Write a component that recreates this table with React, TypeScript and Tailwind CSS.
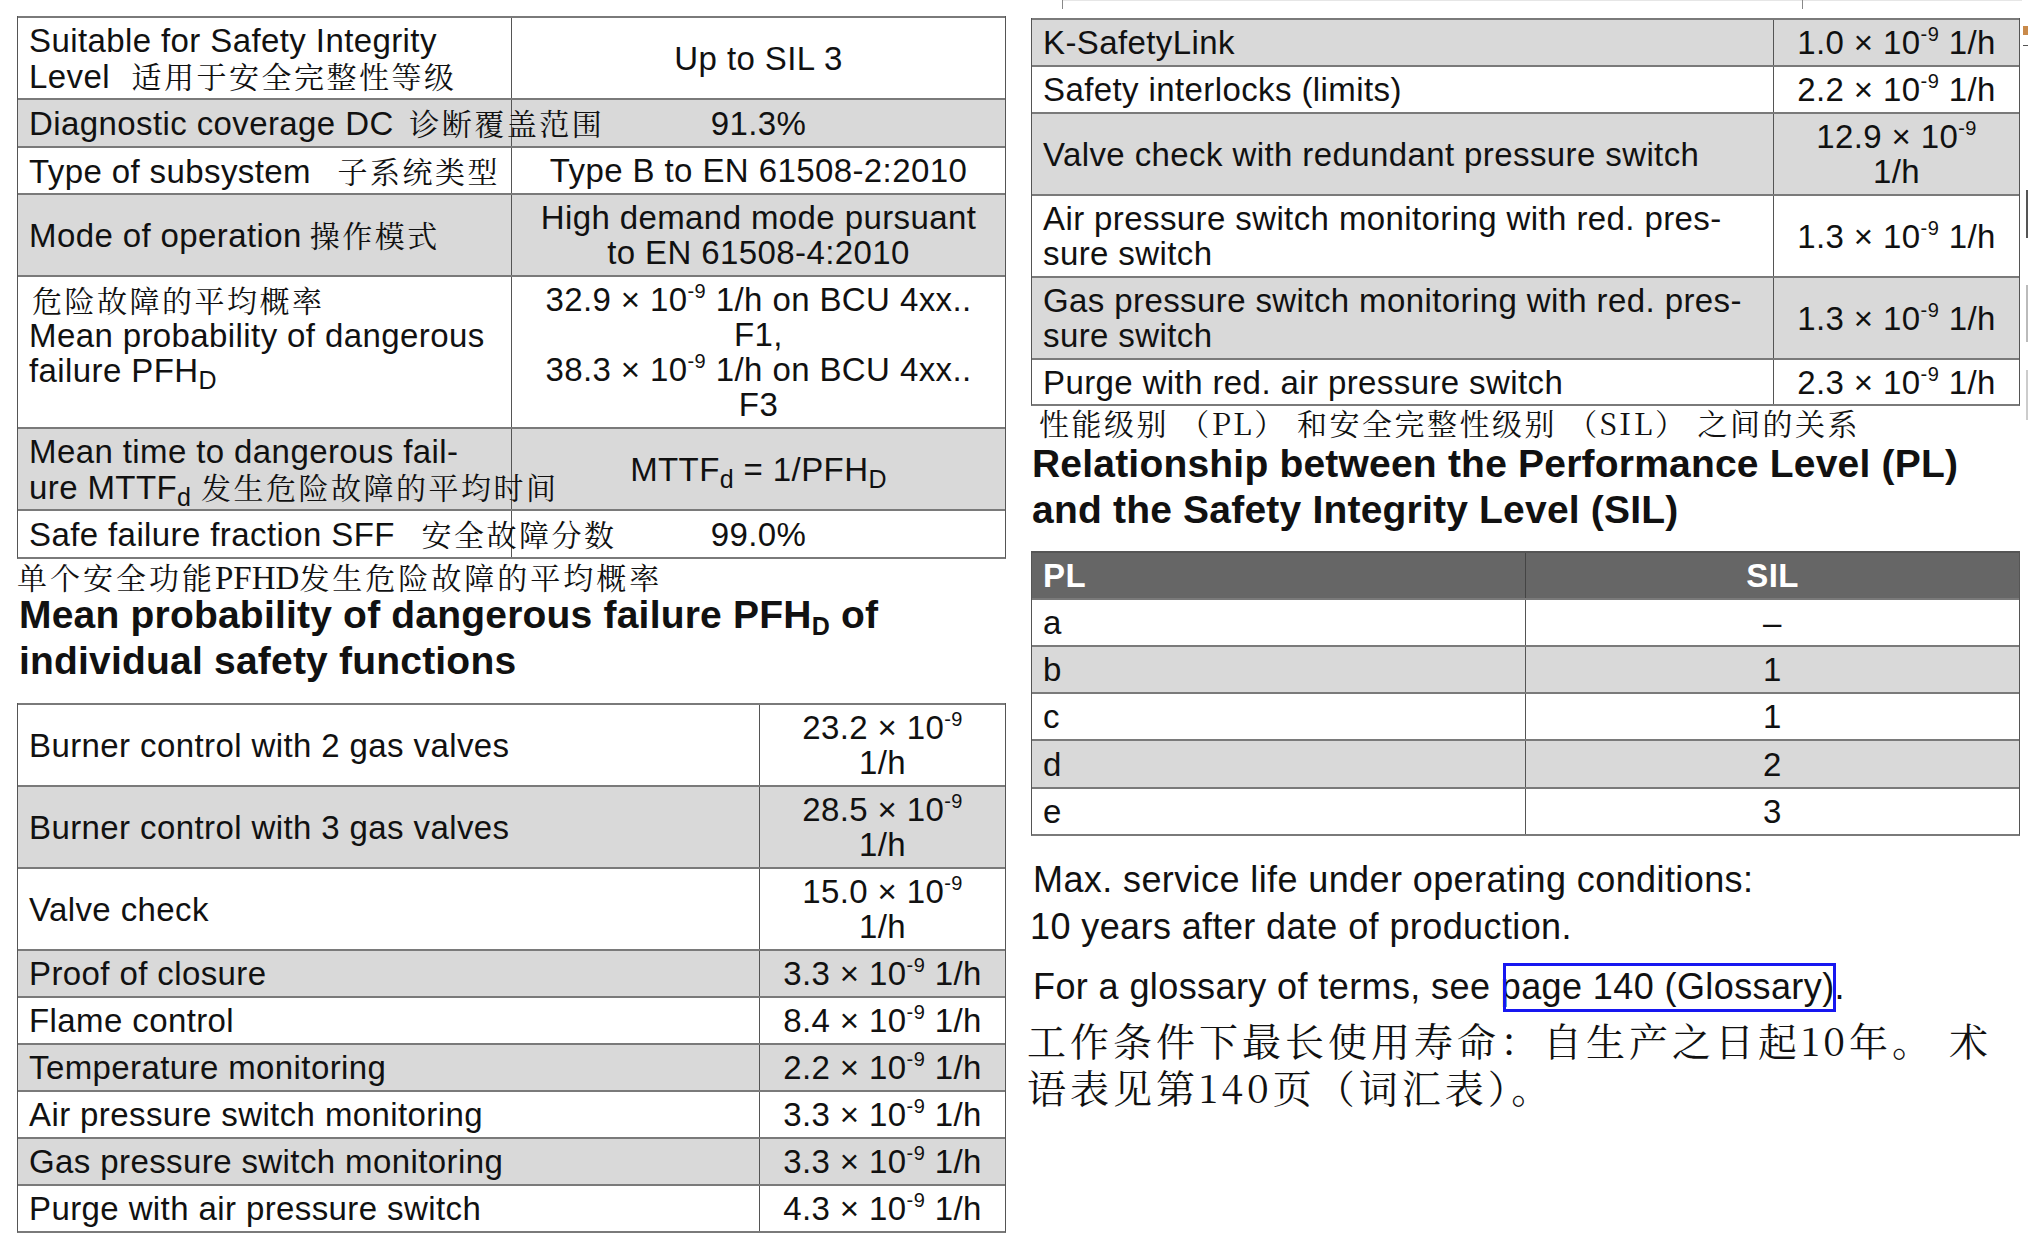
import type { ReactNode } from 'react'

const zhFont = "font-['Noto_Serif_CJK_SC','Noto_Sans_CJK_SC',serif]"

// Chinese overlay text (translation layer on top of the PDF page)
function Zh({ children, cls = 'text-[30px] tracking-[2.5px]', className = '' }: { children: ReactNode; cls?: string; className?: string }) {
  return <span className={`${zhFont} ${cls} ${className}`}>{children}</span>
}

function Exp() {
  return <sup className="text-[20px] -top-[13px]">-9</sup>
}

function Sub({ children }: { children: ReactNode }) {
  return <sub className="text-[25px] -bottom-[7px]">{children}</sub>
}

function Rate({ v }: { v: string }) {
  return (
    <>
      {v} × 10<Exp /> 1/h
    </>
  )
}

interface RowProps {
  h: string
  cols: string
  grey?: boolean
  top?: boolean
  left: ReactNode[]
  right: ReactNode[]
}

function Row({ h, cols, grey, top, left, right }: RowProps) {
  return (
    <div className={`grid ${cols} ${h} border-t-2 border-[#7a7a7a] ${grey ? 'bg-[#d9d9d9]' : 'bg-white'}`}>
      <div className={`flex flex-col border-r border-[#555] pl-[11px] ${top ? 'justify-start pt-[5px]' : 'justify-center'}`}>
        {left.map((l, i) => (
          <div key={i} className="whitespace-nowrap">
            {l}
          </div>
        ))}
      </div>
      <div className={`flex flex-col items-center text-center ${top ? 'justify-start pt-[5px]' : 'justify-center'}`}>
        {right.map((r, i) => (
          <div key={i} className="whitespace-nowrap">
            {r}
          </div>
        ))}
      </div>
    </div>
  )
}

const half = 'grid-cols-[494px_1fr]'
const wide = 'grid-cols-[742px_1fr]'
const tableCls = 'border-x border-[#555] border-b-2 border-b-[#7a7a7a] text-[33px] leading-[35px] tracking-[0.4px]'

export default function App() {
  return (
    <div className="relative w-[2028px] h-[1252px] overflow-hidden bg-white text-[#111] font-['Liberation_Sans',Arial,sans-serif]">
      {/* remnants of the previous table, cut off at the top */}
      <div className="absolute left-[1062px] top-0 w-[960px] h-px bg-[#e6e6e6]" />
      <div className="absolute left-[1062px] top-0 w-px h-[9px] bg-[#888]" />
      <div className="absolute left-[1802px] top-0 w-px h-[9px] bg-[#888]" />
      {/* slivers of the next column at the right edge */}
      <div className="absolute left-[2023px] top-[26px] w-[5px] h-[9px] bg-[#c98a4a]" />
      <div className="absolute left-[2023px] top-[45px] w-[5px] h-px bg-[#555]" />
      <div className="absolute left-[2026px] top-[190px] w-[2px] h-[48px] bg-[#555]" />
      <div className="absolute left-[2026px] top-[285px] w-[2px] h-[57px] bg-[#bbb]" />
      <div className="absolute left-[2026px] top-[370px] w-[2px] h-[50px] bg-[#ccc]" />

      <div className="flex gap-[25px] pl-[17px] pt-[16px]">
        {/* Left column */}
        <div className="w-[989px] shrink-0">
          <div className={tableCls}>
            <Row
              h="h-[82px]"
              cols={half}
              left={['Suitable for Safety Integrity', <>Level <Zh className="ml-[12px]">适用于安全完整性等级</Zh></>]}
              right={['Up to SIL 3']}
            />
            <Row
              h="h-[48px]"
              cols={half}
              grey
              left={[<>Diagnostic coverage DC <Zh className="ml-[6px]">诊断覆盖范围</Zh></>]}
              right={['91.3%']}
            />
            <Row
              h="h-[47px]"
              cols={half}
              left={[<>Type of subsystem <Zh className="ml-[17px]">子系统类型</Zh></>]}
              right={['Type B to EN 61508-2:2010']}
            />
            <Row
              h="h-[82px]"
              cols={half}
              grey
              left={[<>Mode of operation<Zh className="ml-[8px]">操作模式</Zh></>]}
              right={['High demand mode pursuant', 'to EN 61508-4:2010']}
            />
            <Row
              h="h-[152px]"
              cols={half}
              top
              left={[
                <Zh className="ml-[3px]">危险故障的平均概率</Zh>,
                'Mean probability of dangerous',
                <>failure PFH<Sub>D</Sub></>,
              ]}
              right={[
                <><Rate v="32.9" /> on BCU 4xx..</>,
                'F1,',
                <><Rate v="38.3" /> on BCU 4xx..</>,
                'F3',
              ]}
            />
            <Row
              h="h-[82px]"
              cols={half}
              grey
              left={['Mean time to dangerous fail-', <>ure MTTF<Sub>d</Sub> <Zh>发生危险故障的平均时间</Zh></>]}
              right={[<>MTTF<Sub>d</Sub> = 1/PFH<Sub>D</Sub></>]}
            />
            <Row
              h="h-[48px]"
              cols={half}
              left={[<>Safe failure fraction SFF <Zh className="ml-[17px]">安全故障分数</Zh></>]}
              right={['99.0%']}
            />
          </div>

          <div className="mt-[1px] leading-[32px] whitespace-nowrap">
            <Zh cls="text-[30px] tracking-[3px]">单个安全功能</Zh>
            <span className="font-['Liberation_Serif',serif] text-[33px]">PFHD</span>
            <Zh cls="text-[30px] tracking-[3px]">发生危险故障的平均概率</Zh>
          </div>
          <h2 className="-mt-[8px] pl-[2px] text-[39px] leading-[46px] font-bold tracking-[0.2px]">
            Mean probability of dangerous failure PFH<Sub>D</Sub> of
            <br />
            individual safety functions
          </h2>

          <div className={`mt-[19px] ${tableCls}`}>
            <Row h="h-[82px]" cols={wide} left={['Burner control with 2 gas valves']} right={[<>23.2 × 10<Exp /></>, '1/h']} />
            <Row h="h-[82px]" cols={wide} grey left={['Burner control with 3 gas valves']} right={[<>28.5 × 10<Exp /></>, '1/h']} />
            <Row h="h-[82px]" cols={wide} left={['Valve check']} right={[<>15.0 × 10<Exp /></>, '1/h']} />
            <Row h="h-[47px]" cols={wide} grey left={['Proof of closure']} right={[<Rate v="3.3" />]} />
            <Row h="h-[47px]" cols={wide} left={['Flame control']} right={[<Rate v="8.4" />]} />
            <Row h="h-[47px]" cols={wide} grey left={['Temperature monitoring']} right={[<Rate v="2.2" />]} />
            <Row h="h-[47px]" cols={wide} left={['Air pressure switch monitoring']} right={[<Rate v="3.3" />]} />
            <Row h="h-[47px]" cols={wide} grey left={['Gas pressure switch monitoring']} right={[<Rate v="3.3" />]} />
            <Row h="h-[47px]" cols={wide} left={['Purge with air pressure switch']} right={[<Rate v="4.3" />]} />
          </div>
        </div>

        {/* Right column */}
        <div className="w-[989px] shrink-0 pt-[2px]">
          <div className={tableCls}>
            <Row h="h-[47px]" cols={wide} grey left={['K-SafetyLink']} right={[<Rate v="1.0" />]} />
            <Row h="h-[47px]" cols={wide} left={['Safety interlocks (limits)']} right={[<Rate v="2.2" />]} />
            <Row
              h="h-[82px]"
              cols={wide}
              grey
              left={['Valve check with redundant pressure switch']}
              right={[<>12.9 × 10<Exp /></>, '1/h']}
            />
            <Row
              h="h-[82px]"
              cols={wide}
              left={['Air pressure switch monitoring with red. pres-', 'sure switch']}
              right={[<Rate v="1.3" />]}
            />
            <Row
              h="h-[82px]"
              cols={wide}
              grey
              left={['Gas pressure switch monitoring with red. pres-', 'sure switch']}
              right={[<Rate v="1.3" />]}
            />
            <Row h="h-[46px]" cols={wide} left={['Purge with red. air pressure switch']} right={[<Rate v="2.3" />]} />
          </div>

          <div className="pl-[8px] leading-[32px] whitespace-nowrap">
            <Zh>性能级别 （PL） 和安全完整性级别 （SIL） 之间的关系</Zh>
          </div>
          <h2 className="-mt-[5px] pl-[1px] text-[39px] leading-[46px] font-bold tracking-[0.2px]">
            Relationship between the Performance Level (PL)
            <br />
            and the Safety Integrity Level (SIL)
          </h2>

          <div className={`mt-[18px] ${tableCls}`}>
            <div className={`grid ${half} h-[47px] border-t-2 border-[#555] bg-[#666] text-white font-bold`}>
              <div className="flex items-center border-r border-[#444] pl-[11px]">PL</div>
              <div className="flex items-center justify-center">SIL</div>
            </div>
            <Row h="h-[47px]" cols={half} left={['a']} right={['–']} />
            <Row h="h-[47px]" cols={half} grey left={['b']} right={['1']} />
            <Row h="h-[47px]" cols={half} left={['c']} right={['1']} />
            <Row h="h-[48px]" cols={half} grey left={['d']} right={['2']} />
            <Row h="h-[47px]" cols={half} left={['e']} right={['3']} />
          </div>

          <div className="mt-[20px] pl-[2px] text-[36px] leading-[47px] tracking-[0.4px]">
            <p>Max. service life under operating conditions:</p>
            <p className="-ml-[3px]">10 years after date of production.</p>
            <p className="mt-[13px]">
              For a glossary of terms, see{' '}
              <span className="relative">
                page 140 (Glossary)
                <span className="absolute left-[2px] -right-[1px] -top-[3px] -bottom-[5px] border-[3px] border-[#1717f0]" />
              </span>
              .
            </p>
          </div>

          <div className={`mt-[6px] -ml-[4px] ${zhFont} text-[39px] leading-[47px] tracking-[4px] whitespace-nowrap`}>
            <p>工作条件下最长使用寿命：自生产之日起10年。 术</p>
            <p>语表见第140页（词汇表）。</p>
          </div>
        </div>
      </div>
    </div>
  )
}
